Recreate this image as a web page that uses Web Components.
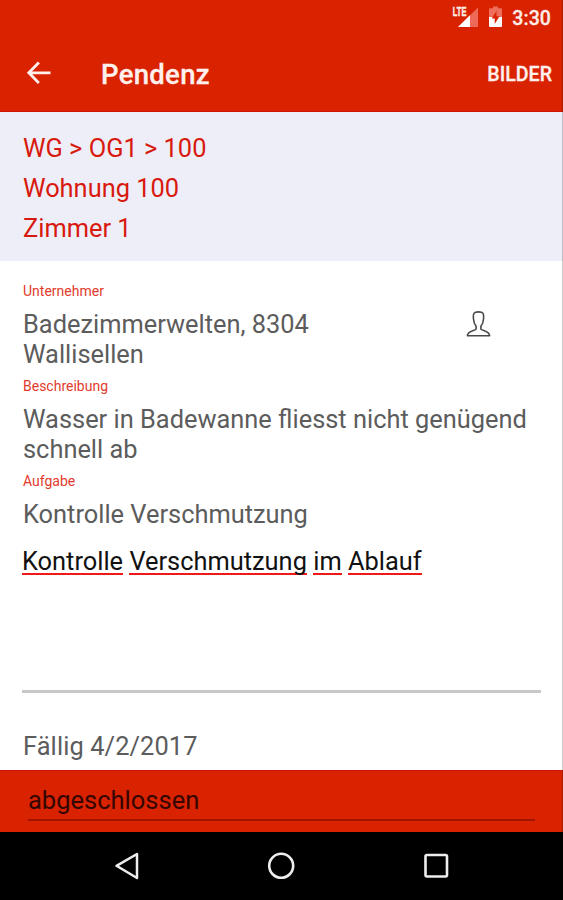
<!DOCTYPE html>
<html lang="de">
<head>
<meta charset="utf-8">
<title>Pendenz</title>
<style>
html, body { margin: 0; }
body { width: 563px; height: 900px; overflow: hidden; background: #fff; font-family: Roboto, "Liberation Sans", sans-serif; }
</style>
</head>
<body>
<pendenz-screen></pendenz-screen>
<script>
function define(name, html) {
  const template = document.createElement('template');
  template.innerHTML = html;
  customElements.define(name, class extends HTMLElement {
    constructor() {
      super();
      this.attachShadow({ mode: 'open' }).append(template.content.cloneNode(true));
    }
  });
}

define('status-bar', `
<style>
:host { display: flex; height: 36px; box-sizing: border-box; justify-content: flex-end; align-items: flex-start; padding: 0 12px 0 0; color: #fdece8; }
svg { display: block; margin-top: 4px; }
.signal { margin-right: 9px; }
.battery { margin-right: 9px; }
.time { font: 500 19.5px/37px Roboto, sans-serif; letter-spacing: .1px; -webkit-text-stroke: .3px #fdece8; }
text { font: 700 12.500px "Liberation Sans", sans-serif; }
</style>
<svg class="signal" width="27" height="24" viewBox="0 0 27 24">
  <path d="M26 3.500v19.500H6z" fill="#ee6a58"/>
  <path d="M18 11.300V23H6z" fill="#fff"/>
  <path d="M0 2h15.500v10.800H0z" fill="#d92200"/>
  <text transform="translate(.8 12) scale(.6 1)" fill="#fdece8" stroke="#fdece8" stroke-width=".5">LTE</text>
</svg>
<svg class="battery" width="15" height="24" viewBox="0 0 15 24">
  <path d="M1 5.2q0-1 1-1h3V2.500h5v1.700h3q1 0 1 1V14H1z" fill="#ee6d5b"/>
  <path d="M1 13h13v9q0 1-1 1H2q-1 0-1-1z" fill="#fff"/>
  <path d="M8.500 7L3.700 14.500h3V20l4.800-7.700h-3z" fill="#d92200"/>
</svg>
<span class="time"><slot></slot></span>`);

define('app-bar', `
<style>
:host { display: flex; height: 76px; box-sizing: border-box; align-items: center; padding: 0 11px 0 25px; color: #fff0ed; border-bottom: 1px solid #d01608; }
svg { display: block; flex: none; margin-top: -1px; }
.title { flex: 1; margin: 2px 0 0 50px; font-size: 27.500px; font-weight: 500; line-height: 32px; letter-spacing: .3px; -webkit-text-stroke: .3px #fff0ed; }
.action { font-size: 19.600px; font-weight: 500; line-height: 24px; margin-top: 3px; -webkit-text-stroke: .3px #fff0ed; }
</style>
<svg width="26" height="26" viewBox="0 0 26 26" fill="none" stroke="#fff0ed" stroke-width="2.800"><path d="M25.500 12.800H3.800M13.900 2.600L3.800 12.800l10.100 10.200"/></svg>
<span class="title"><slot></slot></span>
<span class="action"><slot name="action"></slot></span>`);

define('location-panel', `
<style>
:host { display: block; height: 149px; box-sizing: border-box; padding: 16px 23px 0; background: #eeeef8; color: #d8190e; font-size: 25.400px; line-height: 40px; }
::slotted(div) { white-space: nowrap; }
</style>
<slot></slot>`);

define('detail-field', `
<style>
:host { display: block; padding: 0 23px; }
.label { font-size: 14px; line-height: 16px; color: #e23a2c; }
.row { display: flex; margin-top: 10px; }
.value { flex: 1; font-size: 25.400px; line-height: 30px; color: #5c5c5c; }
</style>
<div class="label"><slot name="label"></slot></div>
<div class="row"><div class="value"><slot></slot></div><slot name="icon"></slot></div>`);

define('person-icon', `
<style>:host { display: block; width: 25px; height: 28px; margin: 1px 49px 0 0; } svg { display: block; }</style>
<svg width="25" height="28" viewBox="0 0 25 28" fill="none" stroke="#484848" stroke-width="1.600" stroke-linejoin="round">
<path d="M10.100 19.200v-3C8.200 14 7.600 11.500 7.400 8.500 7 3.700 7.500 1.900 12.500 1.900S18 3.700 17.600 8.500c-.2 3-.8 5.500-2.700 7.700v3c1 1.700 8.600 1.600 8.700 6.600H1.400c.1-5 7.700-4.900 8.700-6.600z"/></svg>`);

define('spell-input', `
<style>
:host { display: block; box-sizing: border-box; height: 147px; margin: 0 22px; border-bottom: 3px solid #c8c8c8; font-size: 25.400px; line-height: 30px; color: #111; }
::slotted(span) { display: inline-block; height: 27px; border-bottom: 2.500px solid #f01818; }
</style>
<slot></slot>`);

define('due-date', `
<style>:host { display: block; padding: 0 23px; font-size: 25.400px; line-height: 30px; color: #5c5c5c; letter-spacing: .1px; }</style>
<slot></slot>`);

define('status-select', `
<style>
:host { display: block; box-sizing: border-box; height: 62px; padding: 14px 28px 0; background: #d92200; border-top: 1px solid #d01608; color: #350700; font-size: 25.500px; }
div { height: 36px; box-sizing: border-box; line-height: 30px; border-bottom: 2px solid #a21400; }
</style>
<div><slot></slot></div>`);

define('nav-bar', `
<style>
:host { display: flex; height: 68px; box-sizing: border-box; background: #000; align-items: center; justify-content: space-between; padding: 0 113px 0 112px; }
svg { display: block; }
</style>
<svg width="28" height="30" viewBox="0 0 28 30" fill="none" stroke="#eee" stroke-width="2.500" stroke-linejoin="round"><path d="M25 3v24L4.500 14.800z"/></svg>
<svg width="28" height="30" viewBox="0 0 28 30" fill="none" stroke="#eee" stroke-width="2.600"><circle cx="14.200" cy="14.800" r="12"/></svg>
<svg width="28" height="30" viewBox="0 0 28 30" fill="none" stroke="#eee" stroke-width="2.600"><rect x="3.500" y="4" width="21.500" height="21.500" rx="1.500"/></svg>`);

define('pendenz-screen', `
<style>
:host { display: flex; flex-direction: column; position: relative; width: 563px; height: 900px; }
header { background: #d92200; }
main { flex: 1; display: flex; flex-direction: column; padding-top: 22px; box-sizing: border-box; }
detail-field { margin-bottom: 9px; }
spell-input { margin-top: 8px; }
due-date { margin-top: 38px; }
.edge { position: absolute; top: 0; right: 0; width: 1px; height: 832px; background: rgba(0,0,0,.2); }
</style>
<header>
  <status-bar>3:30</status-bar>
  <app-bar>Pendenz<span slot="action">BILDER</span></app-bar>
</header>
<location-panel><div>WG &gt; OG1 &gt; 100</div><div>Wohnung 100</div><div>Zimmer 1</div></location-panel>
<main>
  <detail-field><span slot="label">Unternehmer</span>Badezimmerwelten, 8304<br>Wallisellen<person-icon slot="icon"></person-icon></detail-field>
  <detail-field><span slot="label">Beschreibung</span>Wasser in Badewanne fliesst nicht genügend<br>schnell ab</detail-field>
  <detail-field><span slot="label">Aufgabe</span>Kontrolle Verschmutzung</detail-field>
  <spell-input><span>Kontrolle</span> <span>Verschmutzung</span> <span>im</span> <span>Ablauf</span></spell-input>
  <due-date>Fällig 4/2/2017</due-date>
</main>
<status-select>abgeschlossen</status-select>
<nav-bar></nav-bar>
<div class="edge"></div>`);
</script>
</body>
</html>
